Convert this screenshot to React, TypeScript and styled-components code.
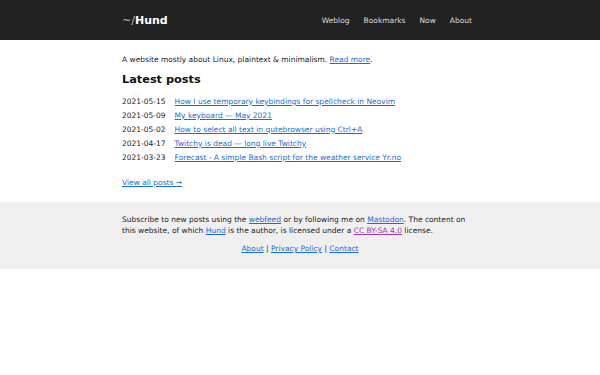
import React from "react";
import styled, { createGlobalStyle } from "styled-components";

const GlobalStyle = createGlobalStyle`
  body {
    margin: 0;
    background: #fff;
    color: #222;
    font-family: "DejaVu Sans", sans-serif;
    font-size: 7.5px;
    line-height: 11px;
  }
  a {
    color: #1a6be0;
  }
`;

const Header = styled.header`
  background: #222;
  height: 40px;
  display: flex;
  align-items: center;
`;

const Container = styled.div`
  width: 356px;
  margin: 0 auto;
`;

const HeaderInner = styled(Container)`
  display: flex;
  align-items: center;
  justify-content: space-between;
`;

const Logo = styled.a`
  color: #fff;
  text-decoration: none;
  font-size: 11px;
  font-weight: bold;
  span {
    color: #bbb;
    font-weight: normal;
  }
`;

const Nav = styled.nav`
  display: flex;
  gap: 14px;
  margin-right: 6px;
`;

const NavLink = styled.a`
  color: #ddd;
  text-decoration: none;
`;

const Main = styled(Container)`
  padding: 13.5px 0 14.5px;
`;

const Intro = styled.p`
  margin: 0 0 8.5px;
`;

const Heading = styled.h2`
  font-size: 11.3px;
  line-height: 14px;
  margin: 0 0 7px;
  color: #111;
`;

const PostList = styled.ul`
  list-style: none;
  margin: 0 0 12.5px;
  padding: 0;
`;

const PostRow = styled.li`
  display: flex;
  gap: 9px;
  height: 14px;
  align-items: center;
`;

const PostDate = styled.span`
  color: #222;
`;

const Footer = styled.footer`
  background: #efefef;
  padding: 11.5px 0 14.5px;
`;

const FooterText = styled.p`
  margin: 0 0 7.5px;
`;

const FooterLinks = styled.p`
  margin: 0;
  text-align: center;
`;

const License = styled.a`
  color: #a23aa8;
`;

const posts = [
  { date: "2021-05-15", title: "How I use temporary keybindings for spellcheck in Neovim" },
  { date: "2021-05-09", title: "My keyboard — May 2021" },
  { date: "2021-05-02", title: "How to select all text in qutebrowser using Ctrl+A" },
  { date: "2021-04-17", title: "Twitchy is dead — long live Twitchy" },
  { date: "2021-03-23", title: "Forecast - A simple Bash script for the weather service Yr.no" },
];

export default function App() {
  return (
    <>
      <GlobalStyle />
      <Header>
        <HeaderInner>
          <Logo href="#">
            <span>~/</span>Hund
          </Logo>
          <Nav>
            <NavLink href="#">Weblog</NavLink>
            <NavLink href="#">Bookmarks</NavLink>
            <NavLink href="#">Now</NavLink>
            <NavLink href="#">About</NavLink>
          </Nav>
        </HeaderInner>
      </Header>
      <Main>
        <Intro>
          A website mostly about Linux, plaintext &amp; minimalism. <a href="#">Read more</a>.
        </Intro>
        <Heading>Latest posts</Heading>
        <PostList>
          {posts.map((post) => (
            <PostRow key={post.date}>
              <PostDate>{post.date}</PostDate>
              <a href="#">{post.title}</a>
            </PostRow>
          ))}
        </PostList>
        <a href="#">View all posts →</a>
      </Main>
      <Footer>
        <Container>
          <FooterText>
            Subscribe to new posts using the <a href="#">webfeed</a> or by following me on{" "}
            <a href="#">Mastodon</a>. The content on this website, of which <a href="#">Hund</a> is the
            author, is licensed under a <License href="#">CC BY-SA 4.0</License> license.
          </FooterText>
          <FooterLinks>
            <a href="#">About</a> | <a href="#">Privacy Policy</a> | <a href="#">Contact</a>
          </FooterLinks>
        </Container>
      </Footer>
    </>
  );
}
